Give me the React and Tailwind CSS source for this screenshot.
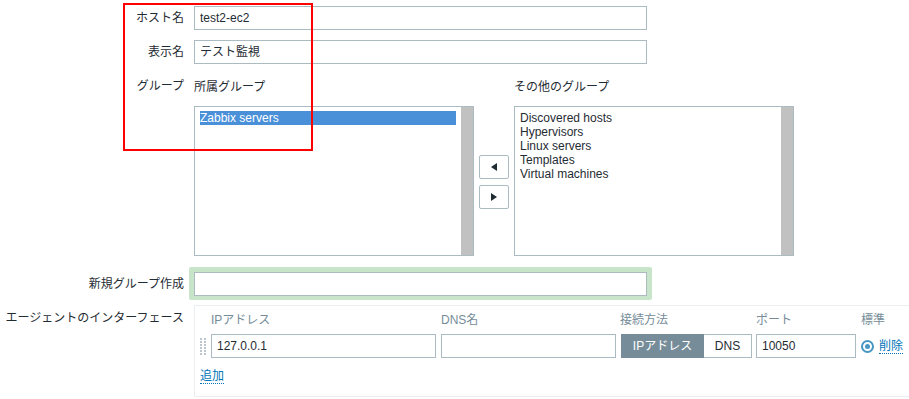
import React from "react";

const font = { fontFamily: '"Liberation Sans", "Noto Sans CJK JP", sans-serif' };

const TextBox = ({ value, className }) => (
  <div
    className={`h-[24px] border border-[#acbbc2] bg-white px-[5px] flex items-center text-[12px] text-[#1f2c33] ${className}`}
  >
    {value}
  </div>
);

const ListBox = ({ items, selected }) => (
  <div className="w-[280px] h-[150px] border border-[#acbbc2] bg-white flex">
    <div className="flex-1 pl-[5px] pr-[5px] pt-[4px] text-[12px] leading-[14px] text-[#1f2c33]">
      {items.map((item) => (
        <div
          key={item}
          className={item === selected ? "bg-[#4a90d9] text-white" : ""}
        >
          {item}
        </div>
      ))}
    </div>
    <div className="w-[12px] bg-[#c1c1c1]" />
  </div>
);

const Arrow = ({ dir }) => (
  <div className="w-[30px] h-[24px] border border-[#acbbc2] rounded-[2px] bg-white flex items-center justify-center">
    <svg width="6" height="8" viewBox="0 0 6 8">
      {dir === "left" ? (
        <path d="M6 0 L0 4 L6 8 Z" fill="#1f2c33" />
      ) : (
        <path d="M0 0 L6 4 L0 8 Z" fill="#1f2c33" />
      )}
    </svg>
  </div>
);

const DragHandle = () => (
  <div className="grid grid-cols-2 gap-x-[2px] gap-y-[1px] w-[6px] mr-[5px]">
    {Array.from({ length: 12 }).map((_, i) => (
      <div key={i} className="w-[2px] h-[2px] bg-[#bcc6cc]" />
    ))}
  </div>
);

export default function App() {
  return (
    <div
      style={font}
      className="relative w-[909px] h-[399px] bg-white overflow-hidden text-[12px] text-[#1f2c33] pt-[6px]"
    >
      {/* host name */}
      <div className="flex items-center">
        <div className="w-[184px] text-right">ホスト名</div>
        <TextBox value="test2-ec2" className="ml-[10px] w-[453px]" />
      </div>

      {/* display name */}
      <div className="flex items-center mt-[10px]">
        <div className="w-[184px] text-right">表示名</div>
        <TextBox value="テスト監視" className="ml-[10px] w-[453px]" />
      </div>

      {/* groups */}
      <div className="flex mt-[13px]">
        <div className="w-[184px] text-right">グループ</div>
        <div className="ml-[10px]">
          <div className="flex items-center h-[19px]">
            <div className="w-[320px] pt-[1px]">所属グループ</div>
            <div className="pt-[1px]">その他のグループ</div>
          </div>
          <div className="flex items-center mt-[10px]">
            <ListBox items={["Zabbix servers"]} selected="Zabbix servers" />
            <div className="flex flex-col gap-[6px] mx-[5px] mt-[1px]">
              <Arrow dir="left" />
              <Arrow dir="right" />
            </div>
            <ListBox
              items={[
                "Discovered hosts",
                "Hypervisors",
                "Linux servers",
                "Templates",
                "Virtual machines",
              ]}
            />
          </div>
        </div>
      </div>

      {/* new group */}
      <div className="flex items-center mt-[11px]">
        <div className="w-[184px] text-right">新規グループ作成</div>
        <div className="ml-[5px] p-[5px] pb-[4px] bg-[#c8e4c9] rounded-[2px]">
          <TextBox value="" className="w-[453px] h-[23px]" />
        </div>
      </div>

      {/* agent interfaces */}
      <div className="flex mt-[5px]">
        <div className="w-[184px] text-right pt-[4px]">
          エージェントのインターフェース
        </div>
        <div className="ml-[10px] flex-1 h-[92px] border border-r-0 border-[#ebeef0] pl-[5px] pt-[5px]">
          <div className="flex items-center h-[18px] text-[#768d99]">
            <div className="w-[230px] pl-[11px]">IPアドレス</div>
            <div className="w-[180px] pl-[11px]">DNS名</div>
            <div className="w-[146px] pl-[10px]">接続方法</div>
            <div className="w-[105px]">ポート</div>
            <div>標準</div>
          </div>
          <div className="flex items-center mt-[5px]">
            <DragHandle />
            <TextBox value="127.0.0.1" className="w-[225px]" />
            <TextBox value="" className="w-[175px] ml-[5px]" />
            <div className="flex ml-[5px] h-[24px]">
              <div className="w-[83px] bg-[#768d99] text-white flex items-center justify-center">
                IPアドレス
              </div>
              <div className="w-[48px] border border-l-0 border-[#acbbc2] flex items-center justify-center">
                DNS
              </div>
            </div>
            <TextBox value="10050" className="w-[100px] ml-[4px]" />
            <div className="ml-[5px] w-[13px] h-[13px] rounded-full border-[2px] border-[#4796c4] flex items-center justify-center">
              <div className="w-[5px] h-[5px] rounded-full bg-[#4796c4]" />
            </div>
            <div className="ml-[5px] text-[#0275b8] border-b border-dotted border-[#0275b8] leading-[14px]">
              削除
            </div>
          </div>
          <div className="mt-[11px] inline-block text-[#0275b8] border-b border-dotted border-[#0275b8] leading-[14px]">
            追加
          </div>
        </div>
      </div>

      {/* annotation */}
      <div className="absolute left-[123px] top-[3px] w-[190px] h-[148px] border-2 border-[#ff0000]" />
    </div>
  );
}
